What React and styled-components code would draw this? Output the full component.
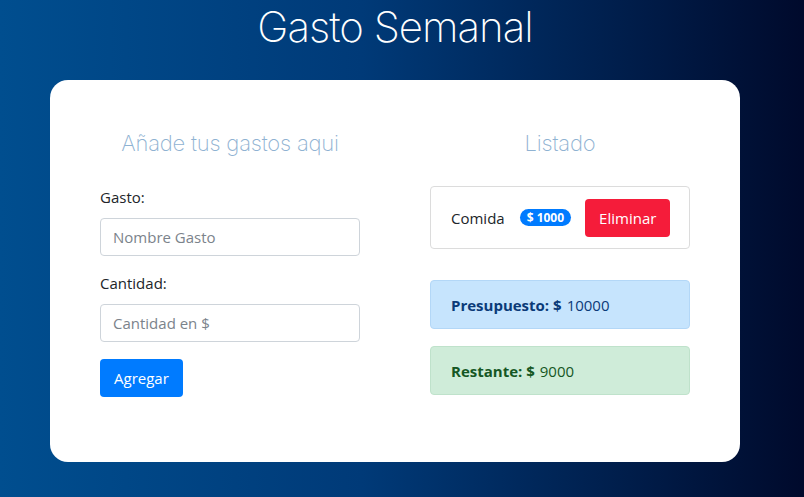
import styled, { createGlobalStyle } from "styled-components";

const GlobalStyle = createGlobalStyle`
  html, body {
    margin: 0;
    padding: 0;
  }
  body {
    font-family: "Open Sans", "Noto Sans", sans-serif;
    background: linear-gradient(to right, #004e8f 0%, #003a78 45%, #000a2c 100%);
    min-height: 497px;
    overflow: hidden;
  }
`;

const Page = styled.div`
  width: 790px;
  height: 497px;
  display: flex;
  flex-direction: column;
  align-items: center;
`;

const Title = styled.h1`
  margin: 3px 0 0;
  font-family: Inter, Lato, sans-serif;
  font-weight: 200;
  font-size: 42px;
  line-height: 48px;
  letter-spacing: -1px;
  color: #ffffff;
`;

const Card = styled.div`
  margin-top: 29px;
  width: 690px;
  height: 382px;
  box-sizing: border-box;
  background: #ffffff;
  border-radius: 18px;
  padding: 46px 50px;
  display: grid;
  grid-template-columns: 260px 260px;
  column-gap: 70px;
`;

const Column = styled.div`
  display: flex;
  flex-direction: column;
`;

const Heading = styled.h2`
  margin: 0 0 26px;
  text-align: center;
  font-family: Inter, Lato, sans-serif;
  font-weight: 200;
  font-size: 22px;
  line-height: 34px;
  letter-spacing: -0.2px;
  color: #8fb2d2;
`;

const Label = styled.label`
  font-size: 15px;
  color: #212529;
  margin-bottom: 10px;
  line-height: 22px;
`;

const Input = styled.input`
  box-sizing: border-box;
  width: 260px;
  height: 38px;
  border: 1px solid #ced4da;
  border-radius: 4px;
  padding: 0 12px;
  font-family: inherit;
  font-size: 15px;
  color: #495057;
  margin-bottom: ${(p) => p.$mb || 0}px;
  &::placeholder {
    color: #7b838b;
  }
`;

const Button = styled.button`
  border: none;
  border-radius: 4px;
  height: 38px;
  padding: 0 ${(p) => p.$px || 13}px;
  font-family: inherit;
  font-size: 15px;
  color: #ffffff;
  background: ${(p) => p.$bg};
  cursor: pointer;
  flex-shrink: 0;
  align-self: ${(p) => p.$align || "flex-start"};
`;

const Item = styled.div`
  box-sizing: border-box;
  height: 63px;
  border: 1px solid #dcdcdc;
  border-radius: 4px;
  display: flex;
  align-items: center;
  padding: 0 20px;
  margin-bottom: 31px;
`;

const ItemName = styled.span`
  font-size: 15px;
  color: #212529;
  margin-right: 15px;
`;

const Badge = styled.span`
  background: #007bff;
  color: #ffffff;
  font-size: 12px;
  font-weight: 700;
  border-radius: 10px;
  padding: 1px 7px;
  line-height: 15px;
  margin-right: 14px;
  white-space: nowrap;
  flex-shrink: 0;
`;

const Alert = styled.div`
  box-sizing: border-box;
  height: 49px;
  border-radius: 4px;
  border: 1px solid ${(p) => p.$border};
  background: ${(p) => p.$bg};
  color: ${(p) => p.$color};
  display: flex;
  align-items: center;
  padding: 0 20px;
  font-size: 15px;
  margin-bottom: 17px;
  b {
    font-weight: 700;
    margin-right: 5px;
  }
`;

export default function App() {
  return (
    <>
      <GlobalStyle />
      <Page>
        <Title>Gasto Semanal</Title>
        <Card>
          <Column>
            <Heading>Añade tus gastos aqui</Heading>
            <Label>Gasto:</Label>
            <Input placeholder="Nombre Gasto" $mb={16} />
            <Label>Cantidad:</Label>
            <Input placeholder="Cantidad en $" $mb={17} />
            <Button $bg="#007bff" $px={14}>Agregar</Button>
          </Column>
          <Column>
            <Heading>Listado</Heading>
            <Item>
              <ItemName>Comida</ItemName>
              <Badge>$ 1000</Badge>
              <Button $bg="#f51c3a" $px={14} $align="center">Eliminar</Button>
            </Item>
            <Alert $bg="#c6e4fd" $border="#b3d7f7" $color="#0b3a78">
              <b>Presupuesto: $</b>10000
            </Alert>
            <Alert $bg="#cfecd9" $border="#bfe2cb" $color="#155724">
              <b>Restante: $</b>9000
            </Alert>
          </Column>
        </Card>
      </Page>
    </>
  );
}
